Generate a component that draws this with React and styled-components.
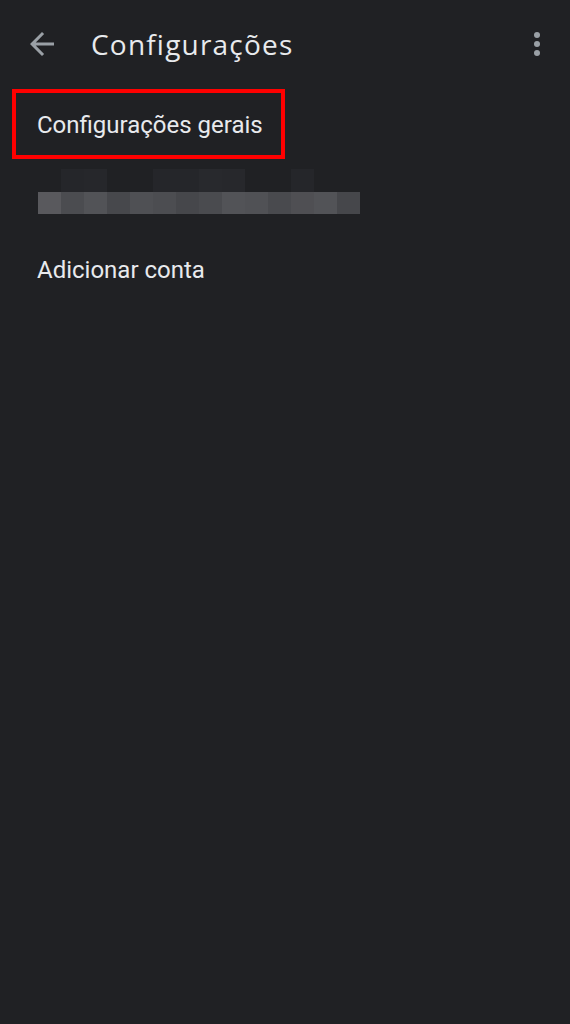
import React from 'react';
import styled, { createGlobalStyle } from 'styled-components';

const GlobalStyle = createGlobalStyle`
  html, body {
    margin: 0;
    padding: 0;
    background: #202124;
  }
  body {
    font-family: Roboto, "Noto Sans", sans-serif;
    -webkit-font-smoothing: antialiased;
  }
`;

const Screen = styled.div`
  width: 570px;
  height: 1024px;
  background: #202124;
  color: #e8eaed;
  overflow: hidden;
`;

const Toolbar = styled.header`
  height: 88px;
  display: flex;
  align-items: center;
  padding: 0 15px 0 24px;
  box-sizing: border-box;
`;

const IconButton = styled.div`
  width: 36px;
  height: 36px;
  display: flex;
  align-items: center;
  justify-content: center;
  color: #9aa0a6;
  flex-shrink: 0;

  svg {
    width: 36px;
    height: 36px;
    fill: currentColor;
  }
`;

const Title = styled.h1`
  flex: 1;
  margin: 0 0 0 31px;
  font-family: "Open Sans", Roboto, sans-serif;
  font-weight: 400;
  font-size: 28px;
  letter-spacing: 1.2px;
  color: #e8eaed;
`;

const List = styled.div`
  display: flex;
  flex-direction: column;
  padding-top: 1px;
`;

const Highlight = styled.div`
  margin-left: 12px;
  width: 273px;
  height: 70px;
  box-sizing: border-box;
  border: 4px solid #ff0000;
  display: flex;
  align-items: center;
  padding: 2px 0 0 21px;
`;

const ItemText = styled.span`
  font-size: 24px;
  font-weight: 400;
  color: #e8eaed;
  white-space: nowrap;
`;

const Item = styled.div`
  height: ${({ $h }) => $h}px;
  display: flex;
  align-items: center;
  padding-left: 37px;
`;

const Mosaic = styled.div`
  margin: 10px 0 0 38px;
  display: grid;
  grid-template-columns: repeat(14, 23px);
  grid-template-rows: 23px 22px;
`;

const Cell = styled.div`
  background: ${({ $c }) => $c};
`;

const topRow = [
  '#202124', '#25262a', '#26272b', '#202124', '#202124', '#25262a', '#25262a',
  '#28292d', '#27282c', '#202124', '#202124', '#25262a', '#202124', '#202124',
];

const bottomRow = [
  '#59595d', '#4b4c50', '#525357', '#47484c', '#4f5054', '#4c4d51', '#46474b',
  '#4a4b4f', '#525357', '#505155', '#494a4e', '#4f4f53', '#525357', '#46474b',
];

const BackIcon = () => (
  <svg viewBox="0 0 24 24">
    <path d="M20 11H7.83l5.59-5.59L12 4l-8 8 8 8 1.41-1.41L7.83 13H20v-2z" />
  </svg>
);

const MoreIcon = () => (
  <svg viewBox="0 0 24 24">
    <circle cx="12" cy="6" r="2" />
    <circle cx="12" cy="12" r="2" />
    <circle cx="12" cy="18" r="2" />
  </svg>
);

export default function App() {
  return (
    <>
      <GlobalStyle />
      <Screen>
        <Toolbar>
          <IconButton>
            <BackIcon />
          </IconButton>
          <Title>Configurações</Title>
          <IconButton>
            <MoreIcon />
          </IconButton>
        </Toolbar>
        <List>
          <Highlight>
            <ItemText>Configurações gerais</ItemText>
          </Highlight>
          <Mosaic>
            {topRow.map((c, i) => (
              <Cell key={`t${i}`} $c={c} />
            ))}
            {bottomRow.map((c, i) => (
              <Cell key={`b${i}`} $c={c} />
            ))}
          </Mosaic>
          <Item $h={112}>
            <ItemText>Adicionar conta</ItemText>
          </Item>
        </List>
      </Screen>
    </>
  );
}
